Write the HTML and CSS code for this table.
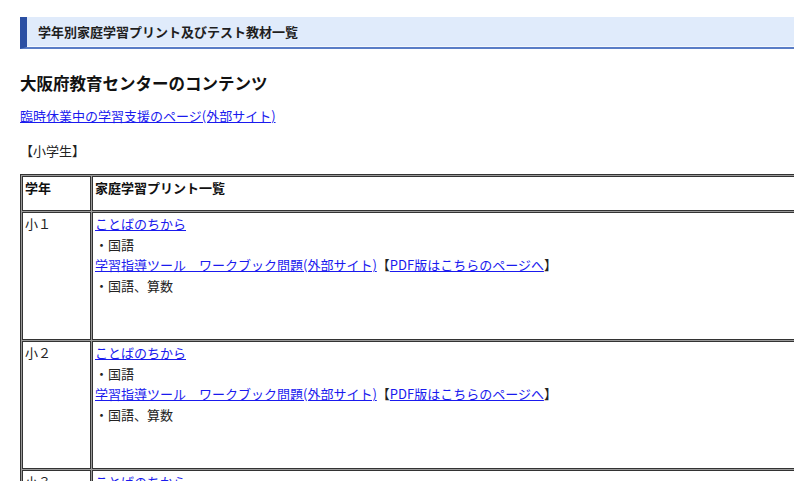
FILE: index.html
```html
<!DOCTYPE html>
<html lang="ja">
<head>
    <meta charset="UTF-8">
    <meta name="viewport" content="width=device-width, initial-scale=1.0">
    <title>学年別家庭学習プリント及びテスト教材一覧</title>
    <link rel="stylesheet" href="styles.css">
</head>
<body>
    <div class="page">
        <h1 class="page-title">学年別家庭学習プリント及びテスト教材一覧</h1>

        <h2 class="section-title">大阪府教育センターのコンテンツ</h2>
        <p class="lead"><a href="#">臨時休業中の学習支援のページ(外部サイト)</a></p>
        <p class="group">【小学生】</p>

        <table class="prints">
            <tr class="head-row">
                <th class="col-grade">学年</th>
                <th>家庭学習プリント一覧</th>
            </tr>
            <tr class="grade-row">
                <td class="col-grade">小１</td>
                <td>
                    <a href="#">ことばのちから</a><br>
                    ・国語<br>
                    <a href="#">学習指導ツール　ワークブック問題(外部サイト)</a>【<a href="#">PDF版はこちらのページへ</a>】<br>
                    ・国語、算数
                </td>
            </tr>
            <tr class="grade-row">
                <td class="col-grade">小２</td>
                <td>
                    <a href="#">ことばのちから</a><br>
                    ・国語<br>
                    <a href="#">学習指導ツール　ワークブック問題(外部サイト)</a>【<a href="#">PDF版はこちらのページへ</a>】<br>
                    ・国語、算数
                </td>
            </tr>
            <tr class="grade-row">
                <td class="col-grade">小３</td>
                <td>
                    <a href="#">ことばのちから</a><br>
                    ・国語<br>
                    <a href="#">学習指導ツール　ワークブック問題(外部サイト)</a>【<a href="#">PDF版はこちらのページへ</a>】<br>
                    ・国語、算数
                </td>
            </tr>
        </table>
    </div>
</body>
</html>
```

FILE: styles.css
```css
html, body {
    margin: 0;
    padding: 0;
    overflow: hidden;
    background: #fff;
}

body {
    font-family: "Noto Sans CJK JP", "Noto Sans", sans-serif;
    font-size: 13px;
    line-height: 20.6px;
    color: #222;
}

.page {
    width: 920px;
    padding: 17px 0 0 20px;
}

a {
    color: #1a1aee;
}

.page-title {
    margin: 0;
    height: 30px;
    padding: 0 0 0 11px;
    font-size: 13px;
    line-height: 29px;
    font-weight: bold;
    color: #1e1e1e;
    background: #e0ebfb;
    border-left: 7px solid #2b4fa3;
    border-bottom: 2px solid #5a7dc6;
    box-shadow: inset 0 -1px 0 #f4f8fe;
}

.section-title {
    margin: 22px 0 0;
    font-size: 16.5px;
    line-height: 24px;
    font-weight: bold;
    color: #111;
}

.lead {
    margin: 11px 0 0;
}

.group {
    margin: 14px 0 0;
}

.prints {
    margin-top: 13px;
    width: 100%;
    border: 1px solid #333;
    border-spacing: 1px;
    background: #9a9a9a;
}

.prints th,
.prints td {
    border: 1px solid #333;
    background: #fff;
    padding: 1px 2px;
    text-align: left;
    vertical-align: top;
    font-size: 13px;
}

.prints th {
    font-weight: bold;
    color: #111;
}

.prints .col-grade {
    width: 63px;
}

.head-row th {
    height: 31px;
}

.grade-row td {
    height: 124px;
}
```
